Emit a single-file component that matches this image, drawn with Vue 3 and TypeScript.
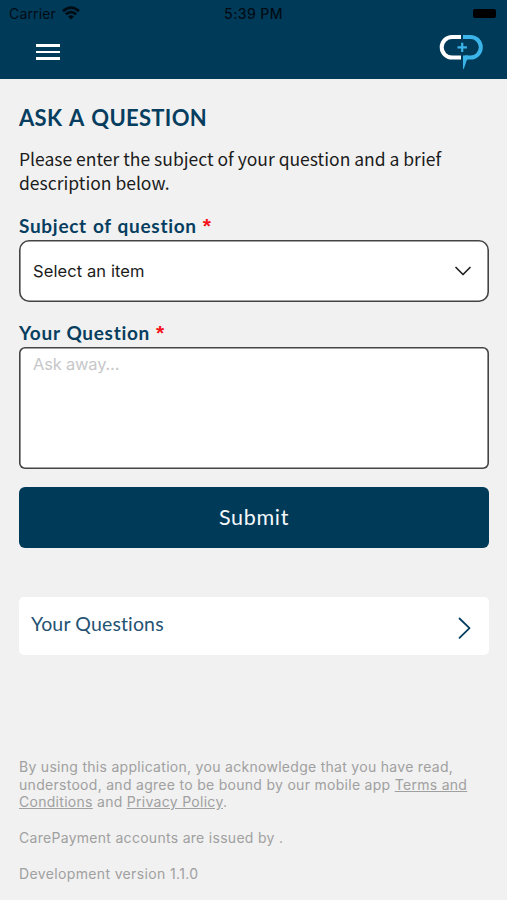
<script setup lang="ts">
import { ref } from 'vue'

const subject = ref('Select an item')
const question = ref('')
</script>

<template>
  <div class="screen">
    <header class="header">
      <div class="status">
        <div class="carrier">
          <span>Carrier</span>
          <svg width="18" height="14" viewBox="0 0 18 14" fill="none" stroke="#000c14" stroke-width="2.8">
            <path d="M1 5.1Q9-1.8 17 5.1M3.8 8.3Q9 3.9 14.2 8.3" />
            <path d="M6 10.6Q9 7.9 12 10.6L9 13.6Z" fill="#000c14" stroke="none" />
          </svg>
        </div>
        <span class="time">5:39 PM</span>
        <span class="battery"></span>
      </div>
      <div class="toolbar">
        <button class="menu" aria-label="Menu"><i></i><i></i><i></i></button>
        <svg class="logo" width="44" height="37" viewBox="0 0 44 37" fill="none">
          <path d="M22 4H13a10.2 10.2 0 0 0 0 20.6H22" stroke="#fff" stroke-width="4" />
          <path d="M24 4h7.5a10.2 10.2 0 0 1 0 20.6H26" stroke="#3bb5e9" stroke-width="4" />
          <path d="M24 22.6h5v4h-1L24.6 36.5 24 35Z" fill="#3bb5e9" />
          <path d="M23.2 9.7v9.4M18.5 14.4h9.4" stroke="#3bb5e9" stroke-width="2.2" />
        </svg>
      </div>
    </header>

    <main class="content">
      <h1>ASK A QUESTION</h1>
      <p class="intro">Please enter the subject of your question and a brief<br />description below.</p>

      <label class="label">Subject of question <b>*</b></label>
      <button class="select">
        <span>{{ subject }}</span>
        <svg width="18" height="12" viewBox="0 0 18 12" fill="none" stroke="#222" stroke-width="1.7" stroke-linecap="round" stroke-linejoin="round">
          <path d="M2 2.5l7 7 7-7" />
        </svg>
      </button>

      <label class="label second" for="question">Your Question <b>*</b></label>
      <textarea id="question" v-model="question" class="area" placeholder="Ask away..."></textarea>

      <button class="submit">Submit</button>

      <button class="row">
        <span>Your Questions</span>
        <svg width="14" height="24" viewBox="0 0 14 24" fill="none" stroke="#073e60" stroke-width="1.8" stroke-linecap="round" stroke-linejoin="round">
          <path d="M2.5 2.5l10 9.7-10 9.7" />
        </svg>
      </button>
    </main>

    <footer class="footer">
      <p>By using this application, you acknowledge that you have read,<br />understood, and agree to be bound by our mobile app <u>Terms and<br />Conditions</u> and <u>Privacy Policy</u>.</p>
      <p>CarePayment accounts are issued by .</p>
      <p class="version">Development version 1.1.0</p>
    </footer>
  </div>
</template>

<style>
body {
  margin: 0;
  background: #f1f1f1;
}
</style>

<style scoped>
* {
  box-sizing: border-box;
}
button {
  border: 0;
  margin: 0;
  padding: 0;
  background: none;
  font: inherit;
}
svg {
  display: block;
  flex: none;
}
.screen {
  height: 900px;
  display: flex;
  flex-direction: column;
  background: #f1f1f1;
  font-family: Inter, sans-serif;
  overflow: hidden;
}
.header {
  height: 79px;
  flex: none;
  background: #003a59;
}
.status {
  height: 27px;
  display: grid;
  grid-template-columns: 1fr auto 1fr;
  align-items: center;
  padding: 0 11px 0 9px;
  font-size: 14px;
  line-height: 27px;
  color: #000c14;
}
.carrier {
  display: flex;
  gap: 6px;
  align-items: center;
  letter-spacing: 0.15px;
}
.carrier svg {
  margin-top: -2px;
}
.time {
  font-weight: 500;
  font-size: 14px;
  letter-spacing: 0.4px;
  padding-left: 2px;
}
.battery {
  justify-self: end;
  width: 23px;
  height: 9px;
  border-radius: 2px;
  background: #000;
}
.toolbar {
  display: flex;
  justify-content: space-between;
  align-items: flex-start;
  padding: 6px 24px 0 36px;
}
.menu {
  display: flex;
  flex-direction: column;
  gap: 4px;
  margin-top: 11px;
  width: 24px;
}
.menu i {
  height: 2.5px;
  background: #fff;
}
.content {
  padding: 0 18px 0 19px;
  display: flex;
  flex-direction: column;
}
h1 {
  margin: 25px 0 0;
  font: 700 22px/28px Lato, sans-serif;
  letter-spacing: 0.3px;
  word-spacing: 1.8px;
  color: #073e60;
}
.intro {
  margin: 15px 0 0;
  font: 400 17.5px/24px "Noto Sans CJK SC", sans-serif;
  color: #1b1b1b;
  white-space: nowrap;
}
.label {
  margin-top: 19px;
  font: 700 19px/24px Lato, sans-serif;
  letter-spacing: 0.7px;
  word-spacing: 0.8px;
  font-variant-ligatures: none;
  color: #073e60;
}
.label b {
  color: #f5131b;
  font: 700 21px/20px "Liberation Sans", sans-serif;
}
.label.second {
  margin-top: 19px;
}
.select {
  height: 62px;
  margin-top: 2px;
  box-shadow: inset 0 0 0 1.6px #444;
  border-radius: 10px;
  background: #fff;
  display: flex;
  align-items: center;
  justify-content: space-between;
  padding: 0 17px 0 14px;
  font-size: 16.5px;
  letter-spacing: 0.1px;
  color: #1b1b1b;
}
.area {
  display: block;
  height: 122px;
  margin: 2px 0 0;
  border: 0;
  box-shadow: inset 0 0 0 1.6px #444;
  border-radius: 6px;
  background: #fff;
  padding: 6px 14px;
  font: 16.5px/22px Inter, sans-serif;
  letter-spacing: -0.2px;
  resize: none;
  outline: none;
}
.area::placeholder {
  color: #c7c7c9;
}
.submit {
  height: 61px;
  margin-top: 18px;
  border-radius: 6px;
  background: #003a59;
  color: #f4f8fa;
  font: 400 21.5px/58px Lato, sans-serif;
  letter-spacing: 0.7px;
  padding-bottom: 2px;
}
.row {
  height: 58px;
  margin-top: 49px;
  border-radius: 5px;
  background: #fff;
  display: flex;
  align-items: center;
  justify-content: space-between;
  padding: 0 18px 0 12px;
  font: 400 19.5px/24px Lato, sans-serif;
  font-variant-ligatures: none;
  letter-spacing: 0.14px;
  color: #245273;
}
.row span {
  margin-top: -4px;
}
.row svg {
  margin-top: 4px;
}
.footer {
  margin-top: auto;
  padding: 0 19px 17.5px;
  font-size: 14px;
  line-height: 17.75px;
  letter-spacing: 0.29px;
  color: #a0a0a0;
  white-space: nowrap;
}
.footer p {
  margin: 0 0 18px;
}
.footer p.version {
  margin: 0;
  letter-spacing: 0.36px;
}
</style>
